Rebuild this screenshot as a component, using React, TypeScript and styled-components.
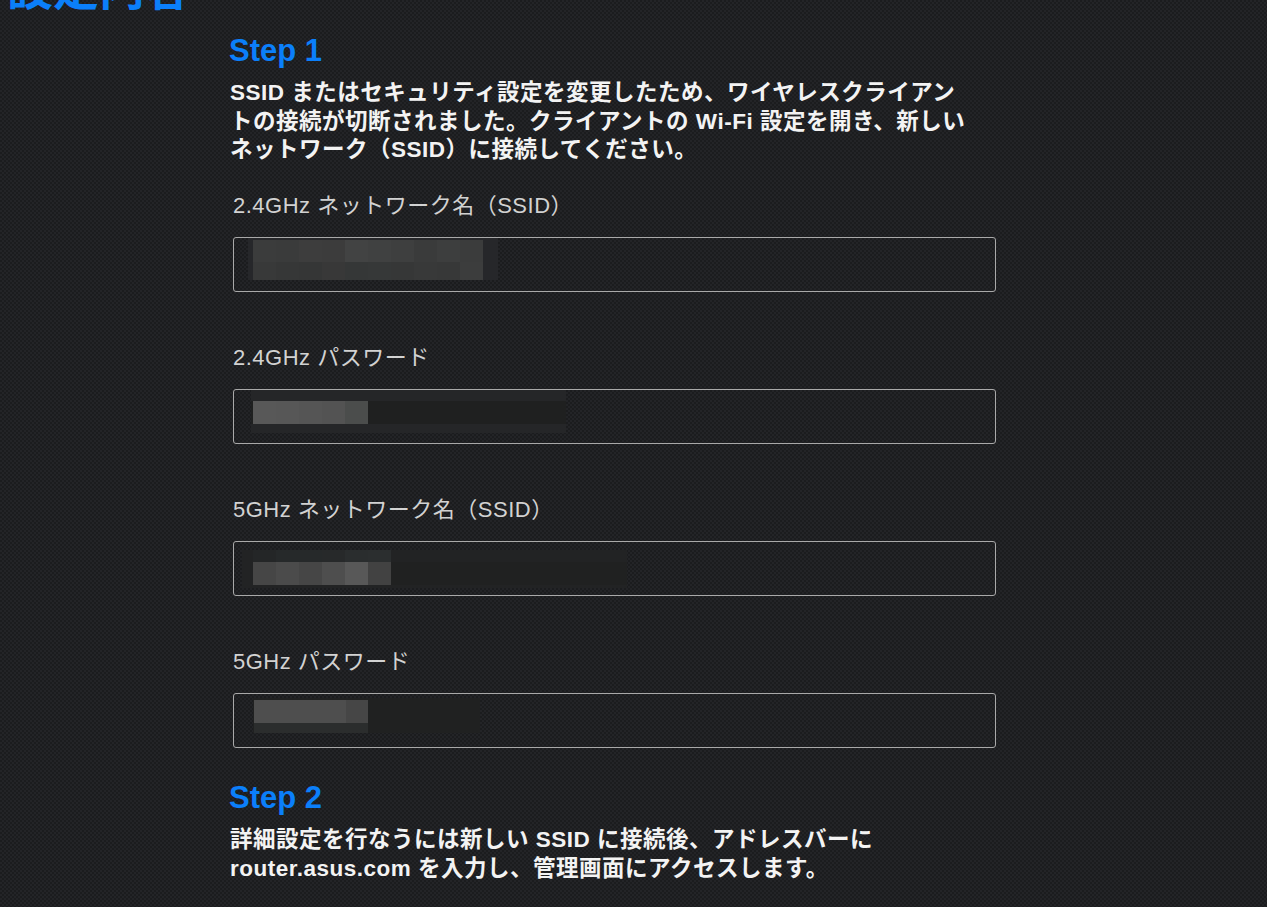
import React from "react";
import styled, { createGlobalStyle } from "styled-components";

const GlobalStyle = createGlobalStyle`
  html, body {
    margin: 0;
    padding: 0;
    min-height: 100%;
    overflow: hidden;
  }
  body {
    background: repeating-conic-gradient(#232427 0 25%, #1b1c1e 0 50%) 0 0 / 4px 4px;
    background-color: #1e1f21;
    font-family: "Liberation Sans", "Noto Sans CJK JP", sans-serif;
  }
`;

const BLUE = "#0b7ffa";

const Page = styled.main`
  height: 907px;
  overflow: hidden;
`;

const Title = styled.h1`
  margin: -38px 0 0 7px;
  font: 700 46px/46px "Noto Sans CJK JP", sans-serif;
  color: ${BLUE};
  white-space: nowrap;
`;

const Content = styled.div`
  margin-left: 229px;
  width: 780px;
  padding-top: 25px;
`;

const StepTitle = styled.h2<{ $gap?: number }>`
  margin: ${(p) => p.$gap ?? 0}px 0 10px;
  font: 700 31px/36px "Liberation Sans", sans-serif;
  color: ${BLUE};
`;

const Lead = styled.p`
  margin: 0 0 0 1px;
  font: 700 22.5px/28.5px "Liberation Sans", "Noto Sans CJK JP", sans-serif;
  letter-spacing: 0.5px;
  color: #f3f3f3;
  white-space: nowrap;
`;

const FieldList = styled.div`
  display: flex;
  flex-direction: column;
  gap: 51px;
  margin-top: 26.5px;
  padding-left: 4px;
`;

const Field = styled.div`
  display: flex;
  flex-direction: column;
  gap: 16px;
`;

const Label = styled.label`
  font: 400 22px/30px "Liberation Sans", "Noto Sans CJK JP", sans-serif;
  letter-spacing: 0.5px;
  color: #d2d2d2;
  white-space: nowrap;
`;

const InputBox = styled.div`
  position: relative;
  box-sizing: border-box;
  width: 763px;
  height: 55px;
  border: 1px solid #a9a9a9;
  border-radius: 3px;
  overflow: hidden;
`;

const Tile = styled.span<{ $x: number; $y: number; $w: number; $h: number; $c: string }>`
  position: absolute;
  left: ${(p) => p.$x - 1}px;
  top: ${(p) => p.$y - 1}px;
  width: ${(p) => p.$w}px;
  height: ${(p) => p.$h}px;
  background: ${(p) => p.$c};
`;

type Rect = [number, number, number, number, string];

const row = (x: number, y: number, h: number, w: number, colors: string[]): Rect[] =>
  colors.map((c, i) => [x + i * w, y, w, h, c] as Rect);

const mosaics: Rect[][] = [
  [
    [15, 0, 250, 43, "#26272a"],
    ...row(20, 3, 22, 23, ["#3b3c3c", "#3a3b3b", "#3d3d3d", "#3c3c3c", "#424343", "#404141", "#3e3f3f", "#3a3b3b", "#3d3e3e", "#3b3c3c"]),
    ...row(20, 25, 18, 23, ["#383939", "#363737", "#353636", "#383838", "#353737", "#363838", "#363737", "#383939", "#373838", "#3c3d3d"]),
  ],
  [
    [18, 0, 315, 44, "#252628"],
    [18, 12, 315, 23, "#1f2020"],
    ...row(20, 12, 23, 23, ["#585858", "#575757", "#555555", "#535353", "#4b4d4c"]),
  ],
  [
    [9, 9, 385, 38, "#222324"],
    [158, 21, 236, 23, "#202121"],
    ...row(20, 9, 12, 23, ["#242627", "#26292a", "#26292a", "#27292a", "#2a2d2e", "#2b2e2f"]),
    ...row(20, 21, 23, 23, ["#464646", "#4b4b4b", "#464646", "#4e4e4e", "#585858", "#424242"]),
  ],
  [
    [20, 5, 227, 35, "#202121"],
    [21, 7, 92, 23, "#4e4e4e"],
    [113, 7, 22, 23, "#464646"],
    [21, 30, 114, 10, "#2b2d2d"],
  ],
];

const labels = [
  "2.4GHz ネットワーク名（SSID）",
  "2.4GHz パスワード",
  "5GHz ネットワーク名（SSID）",
  "5GHz パスワード",
];

export default function App() {
  return (
    <Page>
      <GlobalStyle />
      <Title>設定内容</Title>
      <Content>
        <StepTitle>Step 1</StepTitle>
        <Lead>
          SSID またはセキュリティ設定を変更したため、ワイヤレスクライアン
          <br />
          トの接続が切断されました。クライアントの Wi-Fi 設定を開き、新しい
          <br />
          ネットワーク（SSID）に接続してください。
        </Lead>
        <FieldList>
          {labels.map((label, i) => (
            <Field key={label}>
              <Label>{label}</Label>
              <InputBox>
                {mosaics[i].map(([x, y, w, h, c], j) => (
                  <Tile key={j} $x={x} $y={y} $w={w} $h={h} $c={c} />
                ))}
              </InputBox>
            </Field>
          ))}
        </FieldList>
        <StepTitle $gap={32}>Step 2</StepTitle>
        <Lead>
          詳細設定を行なうには新しい SSID に接続後、アドレスバーに
          <br />
          router.asus.com を入力し、管理画面にアクセスします。
        </Lead>
      </Content>
    </Page>
  );
}
